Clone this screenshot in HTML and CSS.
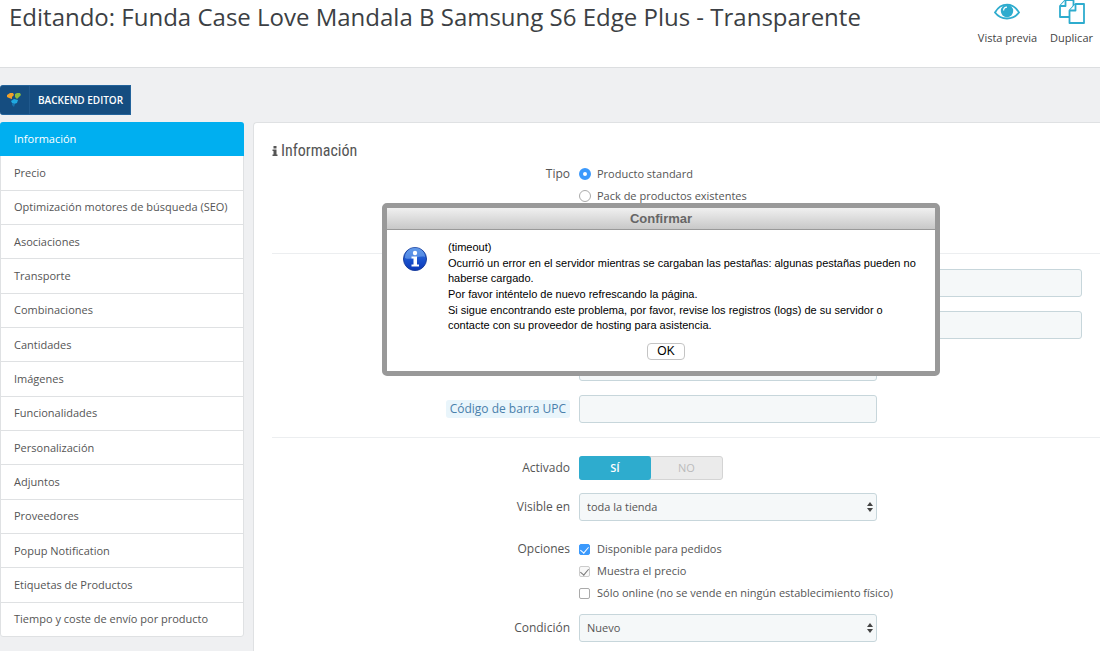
FILE: index.html
```html
<!DOCTYPE html>
<html lang="es">
<head>
<meta charset="utf-8">
<title>Editando producto</title>
<link rel="stylesheet" href="styles.css">
</head>
<body>
<header class="page-head">
  <h1 class="page-title">Editando: Funda Case Love Mandala B Samsung S6 Edge Plus - Transparente</h1>
  <div class="toolbar">
    <a class="tool" href="#">
      <svg class="tool-icon" viewBox="0 0 28 26" aria-hidden="true"><path d="M2 12.500C8 2 20 2 26 12.500C20 20.500 8 20.500 2 12.500Z" fill="#fff" stroke="#2eacce" stroke-width="1.800"/><circle cx="14" cy="11" r="6.200" fill="#2eacce"/><path d="M10.600 10.500a3.500 3.500 0 0 1 3.400-3.400" fill="none" stroke="#fff" stroke-width="1.200"/></svg>
      <span>Vista previa</span>
    </a>
    <a class="tool" href="#">
      <svg class="tool-icon" viewBox="0 0 28 26" aria-hidden="true"><g fill="#fff" stroke="#2eacce" stroke-width="1.800" stroke-linejoin="round"><path d="M2 6L7.500 0H15.500V17H2Z"/><path d="M7.500 0V6H2"/><path d="M11.500 10.500L17.500 4H26V23H11.500Z"/><path d="M17.500 4V10.500H11.500"/></g></svg>
      <span>Duplicar</span>
    </a>
  </div>
</header>

<main class="content">
  <button class="backend" type="button">
    <span class="backend-logo"><svg viewBox="0 0 16 16" width="16" height="16" aria-hidden="true"><path d="M1 3L4 1H7L8 3L6 5V7L3 6L1 5Z" fill="#f0a029"/><path d="M9 2L11 1H14L15 3L13 5L11 7L9 5Z" fill="#8cba3f"/><path d="M5 9L8 7L12 8L11 11L8 12L6 11Z" fill="#1fa8e0"/><path d="M6 11L9 12L8 15L6 13Z" fill="#1872ac"/></svg></span>
    <span class="backend-text">BACKEND EDITOR</span>
  </button>

  <div class="columns">
    <nav class="tabs">
      <a class="tab active" href="#">Información</a>
      <a class="tab" href="#">Precio</a>
      <a class="tab" href="#">Optimización motores de búsqueda (SEO)</a>
      <a class="tab" href="#">Asociaciones</a>
      <a class="tab" href="#">Transporte</a>
      <a class="tab" href="#">Combinaciones</a>
      <a class="tab" href="#">Cantidades</a>
      <a class="tab" href="#">Imágenes</a>
      <a class="tab" href="#">Funcionalidades</a>
      <a class="tab" href="#">Personalización</a>
      <a class="tab" href="#">Adjuntos</a>
      <a class="tab" href="#">Proveedores</a>
      <a class="tab" href="#">Popup Notification</a>
      <a class="tab" href="#">Etiquetas de Productos</a>
      <a class="tab" href="#">Tiempo y coste de envío por producto</a>
    </nav>

    <form class="panel">
      <h2 class="panel-title"><svg width="6" height="10" viewBox="0 0 6 10" aria-hidden="true"><path d="M1.500 0H4.500V2.500H1.500ZM0.500 3.500H4.500V8.500H5.500V10H0.500V8.500H1.500V5H0.500Z" fill="#555"/></svg>Información</h2>

      <div class="row type-row">
        <span class="label" id="tipo">Tipo</span>
        <div class="choices" role="radiogroup" aria-labelledby="tipo">
          <label class="choice"><input class="radio" type="radio" name="tipo" checked>Producto standard</label>
          <label class="choice"><input class="radio" type="radio" name="tipo">Pack de productos existentes</label>
        </div>
      </div>

      <div class="group">
        <div class="row"><span></span><input class="field" type="text" aria-label="Nombre"></div>
        <div class="row"><span></span><input class="field" type="text" aria-label="Código de referencia"></div>
        <div class="row"><span></span><input class="field short" type="text" aria-label="Código de barra EAN-13"></div>
        <div class="row"><label class="label" for="upc"><span class="hint">Código de barra UPC</span></label><input class="field short" type="text" id="upc"></div>
      </div>

      <div class="group last">
        <div class="row">
          <span class="label" id="activo">Activado</span>
          <div class="switch" role="radiogroup" aria-labelledby="activo">
            <label class="switch-side"><input type="radio" name="activo" checked><span>SÍ</span></label>
            <label class="switch-side"><input type="radio" name="activo"><span>NO</span></label>
          </div>
        </div>
        <div class="row">
          <label class="label" for="visible">Visible en</label>
          <div class="pick"><select class="field" id="visible"><option>toda la tienda</option></select><svg class="arrows" viewBox="0 0 6 10" aria-hidden="true"><path d="M3 0L6 4H0ZM0 6H6L3 10Z" fill="#444"/></svg></div>
        </div>
        <div class="row options">
          <span class="label" id="opciones">Opciones</span>
          <div class="choices" role="group" aria-labelledby="opciones">
            <label class="choice"><input class="check" type="checkbox" checked>Disponible para pedidos</label>
            <label class="choice"><input class="check" type="checkbox" checked disabled>Muestra el precio</label>
            <label class="choice"><input class="check" type="checkbox">Sólo online (no se vende en ningún establecimiento físico)</label>
          </div>
        </div>
        <div class="row">
          <label class="label" for="condicion">Condición</label>
          <div class="pick"><select class="field" id="condicion"><option>Nuevo</option></select><svg class="arrows" viewBox="0 0 6 10" aria-hidden="true"><path d="M3 0L6 4H0ZM0 6H6L3 10Z" fill="#444"/></svg></div>
        </div>
      </div>
    </form>
  </div>
</main>

<div class="dialog" role="alertdialog" aria-labelledby="dialog-title">
  <h2 class="dialog-title" id="dialog-title">Confirmar</h2>
  <div class="dialog-body">
    <svg class="info" viewBox="0 0 24 24" aria-hidden="true"><defs><linearGradient id="blue" x1="0" y1="0" x2="0" y2="1"><stop offset="0" stop-color="#3d7fe0"/><stop offset="0.500" stop-color="#1c55cf"/><stop offset="1" stop-color="#0b37b8"/></linearGradient></defs><circle cx="12" cy="12" r="11.500" fill="url(#blue)" stroke="#1b3f9c"/><path d="M2 11a10 10 0 0 1 20-1C16 8 8 14 2 11Z" fill="#7fb0f2" opacity="0.550"/><circle cx="12" cy="6" r="2.200" fill="#fff"/><path d="M8.500 9.500H14V17.500H16V19.500H8.500V17.500H10.500V11.500H8.500Z" fill="#fff"/></svg>
    <div class="message">
      <p>(timeout)</p>
      <p>Ocurrió un error en el servidor mientras se cargaban las pestañas: algunas pestañas pueden no haberse cargado.</p>
      <p>Por favor inténtelo de nuevo refrescando la página.</p>
      <p>Si sigue encontrando este problema, por favor, revise los registros (logs) de su servidor o contacte con su proveedor de hosting para asistencia.</p>
    </div>
  </div>
  <div class="dialog-foot"><button class="ok" type="button">OK</button></div>
</div>
</body>
</html>
```
FILE: styles.css
```css
* { box-sizing: border-box; }
body {
  margin: 0;
  background: #eff0f2;
  color: #555;
  font: 11px/20px "Open Sans", sans-serif;
  overflow: hidden;
}
h1, h2, p { margin: 0; font-weight: 400; }
a { color: inherit; text-decoration: none; }
input, select, button { font: inherit; color: inherit; margin: 0; }

.page-head {
  display: flex;
  justify-content: space-between;
  height: 68px;
  padding: 0 7px 0 9px;
  background: #fff;
  border-bottom: 1px solid #dcdee0;
}
.page-title { font-size: 24px; line-height: 34px; color: #3c3f44; white-space: nowrap; }
.toolbar { display: flex; gap: 13px; }
.tool { display: flex; flex-direction: column; align-items: center; color: #444; }
.tool-icon { width: 28px; height: 26px; margin-bottom: 2px; }

.content { padding-top: 17px; }
.backend {
  display: flex;
  align-items: center;
  height: 30px;
  padding: 0;
  border: 1px solid #23639b;
  border-left: 0;
  border-radius: 3px 0 0 3px;
  background: #154d80;
  color: #fff;
  font-size: 10px;
  font-weight: 600;
}
.backend-logo { display: flex; align-items: center; width: 30px; height: 28px; padding-left: 6px; border-right: 1px solid #20598d; }
.backend-text { padding: 0 7px 0 8px; }

.columns { display: flex; align-items: flex-start; gap: 9px; padding-top: 7px; }
.tabs {
  display: flex;
  flex-direction: column;
  flex: 0 0 244px;
  min-height: 515px;
  border: 1px solid #dfe1e3;
  border-radius: 3px;
  background: #fff;
}
.tab {
  display: flex;
  flex: 1;
  align-items: center;
  padding: 0 13px;
  border-bottom: 1px solid #dfe1e3;
}
.tab:last-child { border-bottom: 0; }
.tab.active { margin: -1px -1px 0; padding: 0 14px; background: #00aff0; border-color: #00aff0; border-radius: 3px 3px 0 0; color: #fff; }

.panel {
  flex: 1;
  min-width: 0;
  min-height: 560px;
  padding: 18px 0 0 18px;
  border: 1px solid #dfe1e3;
  border-right: 0;
  border-radius: 4px 0 0 0;
  background: #fff;
}
.panel-title {
  display: flex;
  align-items: center;
  gap: 3px;
  font: 16px/20px "Ubuntu Condensed", "Liberation Sans Narrow", "Roboto Condensed", "Open Sans", sans-serif;
}
.row { display: grid; grid-template-columns: 298px minmax(0, 1fr); gap: 9px; align-items: center; padding-right: 18px; }
.label { text-align: right; font-size: 12px; }
.type-row, .options { align-items: start; line-height: 16px; }
.type-row { min-height: 92px; padding-top: 5px; }
.choices { display: grid; gap: 6px; }
.choice { display: flex; align-items: center; gap: 6px; }
.group { display: grid; gap: 14px; padding: 15px 0 14px; border-top: 1px solid #eceef0; }
.group.last { gap: 13px; padding-top: 18px; }
.options { padding-top: 7px; }

.field {
  display: block;
  width: 100%;
  height: 28px;
  padding: 0 7px;
  border: 1px solid #c7d6db;
  border-radius: 3px;
  background: #f5f8f9;
  appearance: none;
}
.short, .pick { max-width: 298px; }
.pick { position: relative; }
.arrows { position: absolute; right: 4px; top: 9px; width: 6px; height: 10px; pointer-events: none; }
.hint { display: inline-block; padding: 0 4px; line-height: 18px; background: #e9f5fb; border-radius: 3px; color: #4a80ab; }

.radio { appearance: none; width: 12px; height: 12px; border: 1px solid #aaa; border-radius: 50%; background: #fff; }
.radio:checked { border: 4px solid #3b99fc; }
.check { appearance: none; width: 11px; height: 11px; margin-right: 1px; border: 1px solid #aaa; border-radius: 2px; background: #fff; }
.check:checked { display: grid; place-items: center; border-color: #3b99fc; background: #3b99fc; color: #fff; }
.check:checked::before { content: ""; width: 4px; height: 7px; margin-bottom: 2px; border: solid currentColor; border-width: 0 1px 1px 0; transform: rotate(40deg); }
.check:checked:disabled { border-color: #ccc; background: #f8f8f8; color: #777; }

.switch { display: flex; width: 144px; height: 24px; border: 1px solid #d4d4d4; border-radius: 3px; background: #ebebeb; color: #bbb; }
.switch-side { position: relative; flex: 1; }
.switch-side input { position: absolute; opacity: 0; }
.switch-side span { display: block; height: 22px; line-height: 22px; text-align: center; }
.switch-side input:checked + span { height: 24px; margin: -1px 0 0 -1px; line-height: 24px; border-radius: 3px; background: #2eacce; color: #fff; font-weight: 600; }

.dialog {
  position: absolute;
  top: 203px;
  left: 382px;
  width: 558px;
  border: 5px solid #999;
  border-radius: 5px;
  background: #fff;
  color: #000;
  font: 11px/15px "Liberation Sans", Arial, sans-serif;
}
.dialog-title {
  border-bottom: 1px solid #999;
  background: linear-gradient(#f0f0f0, #c8c8c8);
  color: #666;
  font-size: 13px;
  font-weight: 700;
  line-height: 21px;
  text-align: center;
}
.dialog-body { display: flex; gap: 21px; padding: 10px 12px 10px 16px; }
.info { flex: none; width: 24px; height: 24px; margin-top: 7px; }
.message { display: grid; gap: 1px; }
.dialog-foot { display: flex; justify-content: center; padding: 0 0 11px 10px; }
.ok { width: 38px; height: 17px; padding: 0; border: 1px solid #c4c4c4; border-radius: 4px; background: #fff; font-size: 12px; line-height: 15px; }
```
